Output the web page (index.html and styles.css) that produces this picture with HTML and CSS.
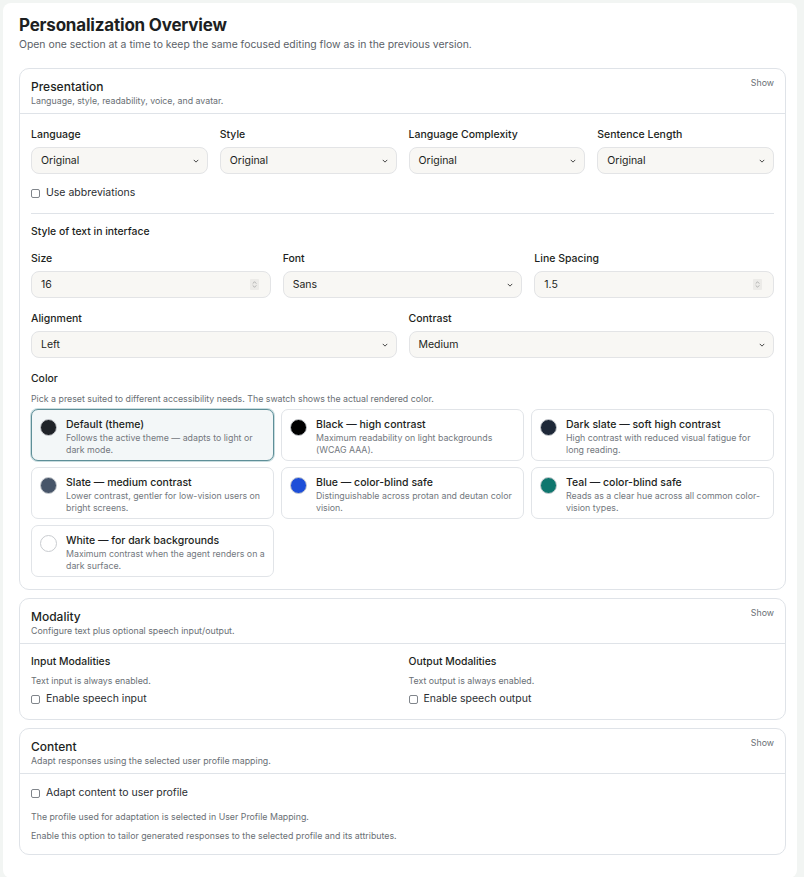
FILE: index.html
```html
<!DOCTYPE html>
<html>
<head>
<meta charset="UTF-8">
<title>Personalization Overview</title>
<link rel="stylesheet" href="styles.css">
</head>
<body>
<div class="page">
  <h1>Personalization Overview</h1>
  <p class="lead">Open one section at a time to keep the same focused editing flow as in the previous version.</p>

  <section class="panel">
    <header class="panel-head">
      <div>
        <h2>Presentation</h2>
        <p class="panel-sub">Language, style, readability, voice, and avatar.</p>
      </div>
      <span class="toggle">Show</span>
    </header>
    <div class="panel-body presentation">
      <div class="grid cols-4">
        <div class="field">
          <label>Language</label>
          <div class="select"><span>Original</span><svg class="chev" viewBox="0 0 8 5"><path d="M1 1l3 3 3-3"/></svg></div>
        </div>
        <div class="field">
          <label>Style</label>
          <div class="select"><span>Original</span><svg class="chev" viewBox="0 0 8 5"><path d="M1 1l3 3 3-3"/></svg></div>
        </div>
        <div class="field">
          <label>Language Complexity</label>
          <div class="select"><span>Original</span><svg class="chev" viewBox="0 0 8 5"><path d="M1 1l3 3 3-3"/></svg></div>
        </div>
        <div class="field">
          <label>Sentence Length</label>
          <div class="select"><span>Original</span><svg class="chev" viewBox="0 0 8 5"><path d="M1 1l3 3 3-3"/></svg></div>
        </div>
      </div>
      <label class="check abbr"><input type="checkbox"> Use abbreviations</label>

      <hr class="rule">

      <h3>Style of text in interface</h3>
      <div class="grid cols-3">
        <div class="field">
          <label>Size</label>
          <div class="select"><span>16</span><svg class="spin" viewBox="0 0 10 12"><rect width="10" height="12" rx="1"/><path d="M3 5l2-2 2 2M3 7l2 2 2-2"/></svg></div>
        </div>
        <div class="field">
          <label>Font</label>
          <div class="select"><span>Sans</span><svg class="chev" viewBox="0 0 8 5"><path d="M1 1l3 3 3-3"/></svg></div>
        </div>
        <div class="field">
          <label>Line Spacing</label>
          <div class="select"><span>1.5</span><svg class="spin" viewBox="0 0 10 12"><rect width="10" height="12" rx="1"/><path d="M3 5l2-2 2 2M3 7l2 2 2-2"/></svg></div>
        </div>
      </div>
      <div class="grid cols-2 spaced">
        <div class="field">
          <label>Alignment</label>
          <div class="select"><span>Left</span><svg class="chev" viewBox="0 0 8 5"><path d="M1 1l3 3 3-3"/></svg></div>
        </div>
        <div class="field">
          <label>Contrast</label>
          <div class="select"><span>Medium</span><svg class="chev" viewBox="0 0 8 5"><path d="M1 1l3 3 3-3"/></svg></div>
        </div>
      </div>

      <h3 class="color-title">Color</h3>
      <p class="hint">Pick a preset suited to different accessibility needs. The swatch shows the actual rendered color.</p>
      <div class="swatches">
        <div class="swatch active">
          <span class="dot" style="background:#1f2328"></span>
          <div><div class="sw-name">Default (theme)</div><div class="sw-desc">Follows the active theme — adapts to light or dark mode.</div></div>
        </div>
        <div class="swatch">
          <span class="dot" style="background:#000000"></span>
          <div><div class="sw-name">Black — high contrast</div><div class="sw-desc">Maximum readability on light backgrounds (WCAG AAA).</div></div>
        </div>
        <div class="swatch">
          <span class="dot" style="background:#1e2838"></span>
          <div><div class="sw-name">Dark slate — soft high contrast</div><div class="sw-desc">High contrast with reduced visual fatigue for long reading.</div></div>
        </div>
        <div class="swatch">
          <span class="dot" style="background:#475569"></span>
          <div><div class="sw-name">Slate — medium contrast</div><div class="sw-desc">Lower contrast, gentler for low-vision users on bright screens.</div></div>
        </div>
        <div class="swatch">
          <span class="dot" style="background:#1d4ed8"></span>
          <div><div class="sw-name">Blue — color-blind safe</div><div class="sw-desc">Distinguishable across protan and deutan color vision.</div></div>
        </div>
        <div class="swatch">
          <span class="dot" style="background:#0f766e"></span>
          <div><div class="sw-name">Teal — color-blind safe</div><div class="sw-desc">Reads as a clear hue across all common color-vision types.</div></div>
        </div>
        <div class="swatch">
          <span class="dot" style="background:#ffffff"></span>
          <div><div class="sw-name">White — for dark backgrounds</div><div class="sw-desc">Maximum contrast when the agent renders on a dark surface.</div></div>
        </div>
      </div>
    </div>
  </section>

  <section class="panel">
    <header class="panel-head">
      <div>
        <h2>Modality</h2>
        <p class="panel-sub">Configure text plus optional speech input/output.</p>
      </div>
      <span class="toggle">Show</span>
    </header>
    <div class="panel-body modality">
      <div class="grid cols-2">
        <div>
          <h3>Input Modalities</h3>
          <p class="note">Text input is always enabled.</p>
          <label class="check"><input type="checkbox"> Enable speech input</label>
        </div>
        <div>
          <h3>Output Modalities</h3>
          <p class="note">Text output is always enabled.</p>
          <label class="check"><input type="checkbox"> Enable speech output</label>
        </div>
      </div>
    </div>
  </section>

  <section class="panel">
    <header class="panel-head">
      <div>
        <h2>Content</h2>
        <p class="panel-sub">Adapt responses using the selected user profile mapping.</p>
      </div>
      <span class="toggle">Show</span>
    </header>
    <div class="panel-body content">
      <label class="check"><input type="checkbox"> Adapt content to user profile</label>
      <p class="note">The profile used for adaptation is selected in User Profile Mapping.</p>
      <p class="note">Enable this option to tailor generated responses to the selected profile and its attributes.</p>
    </div>
  </section>
</div>
</body>
</html>
```

FILE: styles.css
```css
body {
	margin: 0;
	background-color: #f2f5f3;
	font-family: Inter, "Noto Sans", Arial, sans-serif;
	color: #1d1f22;
	padding: 3px 7px 7px 3px;
}

.page {
	background: #fff;
	border-radius: 8px;
	padding: 11px 11px 15px 16px;
}

h1 {
	margin: 0;
	font-size: 17px;
	font-weight: 700;
	letter-spacing: -0.2px;
	line-height: 22px;
}

.lead {
	margin: 2px 0 17px;
	font-size: 10.4px;
	color: #5b6168;
}

.panel {
	border: 1px solid #dfe3e8;
	border-radius: 10px;
	margin-bottom: 8px;
}

.panel-head {
	display: flex;
	justify-content: space-between;
	align-items: flex-start;
	padding: 9px 11px 7px 11px;
	border-bottom: 1px solid #dfe3e8;
}

h2 {
	margin: 0;
	font-size: 12px;
	font-weight: 500;
	line-height: 17px;
}

.panel-sub {
	margin: 0;
	font-size: 8.8px;
	color: #6a6f75;
}

.toggle {
	font-size: 8.8px;
	line-height: 11px;
	color: #6a6f75;
	margin-top: -1px;
}

.panel-body {
	padding: 14px 11px 11px 11px;
}

.presentation { padding-bottom: 12px; }

.grid {
	display: grid;
	gap: 12px;
}

.cols-4 { grid-template-columns: repeat(4, 1fr); }
.cols-3 { grid-template-columns: repeat(3, 1fr); }
.cols-2 { grid-template-columns: repeat(2, 1fr); }
.spaced { margin-top: 14px; }

.field label {
	display: block;
	font-size: 10.5px;
	font-weight: 500;
	line-height: 14px;
	margin-bottom: 5px;
}

.select {
	display: flex;
	align-items: center;
	justify-content: space-between;
	height: 25px;
	padding: 0 8px 0 9px;
	background: #f8f7f4;
	border: 1px solid #e3e4e6;
	border-radius: 8px;
	font-size: 10.5px;
}

.chev {
	width: 6px;
	height: 4px;
	fill: none;
	stroke: #333;
	stroke-width: 1.2;
}

.spin {
	width: 9px;
	height: 11px;
	margin-right: 3px;
}

.spin rect { fill: #ecebe8; }
.spin path { fill: none; stroke: #9a9a9a; stroke-width: 0.8; }

.check {
	display: flex;
	align-items: center;
	gap: 6px;
	font-size: 10.5px;
	line-height: 14px;
	color: #2a2d31;
}

.check input {
	appearance: none;
	margin: 0;
	width: 9px;
	height: 9px;
	border: 1px solid #80858b;
	border-radius: 2px;
}

.abbr { margin-top: 12px; }

.rule {
	border: 0;
	border-top: 1px solid #dfe3e8;
	margin: 13px 0 11px;
}

h3 {
	margin: 0 0 13px;
	font-size: 10.4px;
	font-weight: 500;
	line-height: 14px;
}

.color-title {
	margin: 14px 0 7px;
}

.hint {
	margin: 0 0 4px;
	font-size: 8.8px;
	line-height: 12px;
	color: #6a6f75;
}

.swatches {
	display: grid;
	grid-template-columns: repeat(3, 1fr);
	gap: 6px 7px;
}

.swatch {
	display: flex;
	gap: 9px;
	align-items: flex-start;
	height: 52px;
	box-sizing: border-box;
	padding: 7px 8px;
	border: 1px solid #e1e4e8;
	border-radius: 7px;
}

.swatch.active {
	background: #f3f7f8;
	border: 1px solid #5e8f98;
	box-shadow: 0 0 0 1px #c8dcdf;
}

.dot {
	flex: none;
	width: 15px;
	height: 15px;
	border-radius: 50%;
	border: 1px solid #c9ccd0;
	margin-top: 2px;
}

.sw-name {
	font-size: 10.5px;
	font-weight: 500;
	line-height: 15px;
}

.sw-desc {
	font-size: 8.8px;
	line-height: 11.5px;
	color: #73787e;
}

.note {
	margin: 0;
	font-size: 8.8px;
	line-height: 12px;
	color: #6a6f75;
}

.modality { padding-top: 11px; padding-bottom: 13px; }
.modality h3 { margin-bottom: 6px; }
.modality .note { margin-bottom: 5px; }

.content { padding-top: 12px; padding-bottom: 12px; }
.content .check { margin-bottom: 11px; }
.content .note + .note { margin-top: 7px; }
```
